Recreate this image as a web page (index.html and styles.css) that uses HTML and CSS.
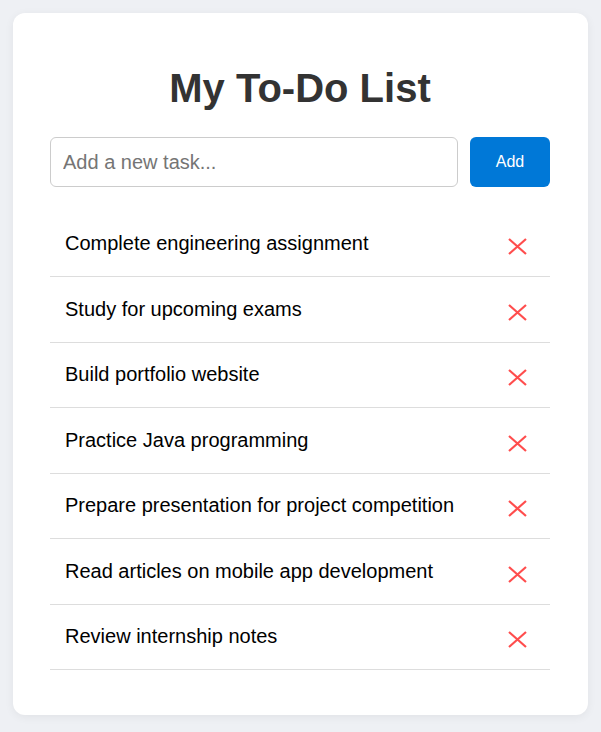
FILE: index.html
```html
<!DOCTYPE html>
<html lang="en">
<head>
<meta charset="utf-8">
<title>My To-Do List</title>
<link rel="stylesheet" href="styles.css">
</head>
<body>
<main class="card">
  <h1 class="title">My To-Do List</h1>
  <form class="add-row">
    <input class="task-input" type="text" placeholder="Add a new task...">
    <button class="add-btn" type="button">Add</button>
  </form>
  <ul class="task-list">
    <li class="task"><span class="task-text">Complete engineering assignment</span><button class="del-btn" type="button" aria-label="Delete"><svg class="x-icon" viewBox="0 0 19 17"><path d="M1 1 L18 16 M18 1 L1 16"/></svg></button></li>
    <li class="task"><span class="task-text">Study for upcoming exams</span><button class="del-btn" type="button" aria-label="Delete"><svg class="x-icon" viewBox="0 0 19 17"><path d="M1 1 L18 16 M18 1 L1 16"/></svg></button></li>
    <li class="task"><span class="task-text">Build portfolio website</span><button class="del-btn" type="button" aria-label="Delete"><svg class="x-icon" viewBox="0 0 19 17"><path d="M1 1 L18 16 M18 1 L1 16"/></svg></button></li>
    <li class="task"><span class="task-text">Practice Java programming</span><button class="del-btn" type="button" aria-label="Delete"><svg class="x-icon" viewBox="0 0 19 17"><path d="M1 1 L18 16 M18 1 L1 16"/></svg></button></li>
    <li class="task"><span class="task-text">Prepare presentation for project competition</span><button class="del-btn" type="button" aria-label="Delete"><svg class="x-icon" viewBox="0 0 19 17"><path d="M1 1 L18 16 M18 1 L1 16"/></svg></button></li>
    <li class="task"><span class="task-text">Read articles on mobile app development</span><button class="del-btn" type="button" aria-label="Delete"><svg class="x-icon" viewBox="0 0 19 17"><path d="M1 1 L18 16 M18 1 L1 16"/></svg></button></li>
    <li class="task"><span class="task-text">Review internship notes</span><button class="del-btn" type="button" aria-label="Delete"><svg class="x-icon" viewBox="0 0 19 17"><path d="M1 1 L18 16 M18 1 L1 16"/></svg></button></li>
  </ul>
</main>
</body>
</html>
```
FILE: styles.css
```css
* { box-sizing: border-box; }

html, body {
  margin: 0;
  background: #eef0f4;
}

body {
  padding: 13px;
  font-family: "Liberation Sans", Arial, sans-serif;
}

.card {
  background: #ffffff;
  border-radius: 12px;
  box-shadow: 0 2px 10px rgba(0, 0, 0, 0.06);
  padding: 52px 38px 45px 37px;
}

.title {
  margin: 0 0 26px;
  font-size: 40px;
  font-weight: bold;
  line-height: 46px;
  color: #333333;
  text-align: center;
}

.add-row {
  display: flex;
  gap: 12px;
  margin: 0;
}

.task-input {
  flex: 1;
  height: 50px;
  padding: 0 12px;
  border: 1px solid #cccccc;
  border-radius: 6px;
  font-family: "Liberation Sans", Arial, sans-serif;
  font-size: 20px;
  color: #222;
  outline: none;
}

.task-input::placeholder {
  color: #757575;
}

.add-btn {
  width: 80px;
  height: 50px;
  border: none;
  border-radius: 6px;
  background: #0078d7;
  color: #ffffff;
  font-family: "Liberation Sans", Arial, sans-serif;
  font-size: 16px;
  padding: 0;
}

.task-list {
  list-style: none;
  margin: 24.5px 0 0;
  padding: 0;
}

.task {
  display: flex;
  align-items: center;
  justify-content: space-between;
  padding: 15px 15px;
  border-bottom: 1px solid #dddddd;
}

.task-text {
  font-size: 20px;
  line-height: 23px;
  color: #000000;
}

.del-btn {
  display: flex;
  background: none;
  border: none;
  padding: 11.5px 8px 6px;
  height: 34.5px;
  cursor: pointer;
}

.x-icon {
  display: block;
  width: 19px;
  height: 17px;
  fill: none;
  stroke: #ff4d4d;
  stroke-width: 2.2;
}
```
